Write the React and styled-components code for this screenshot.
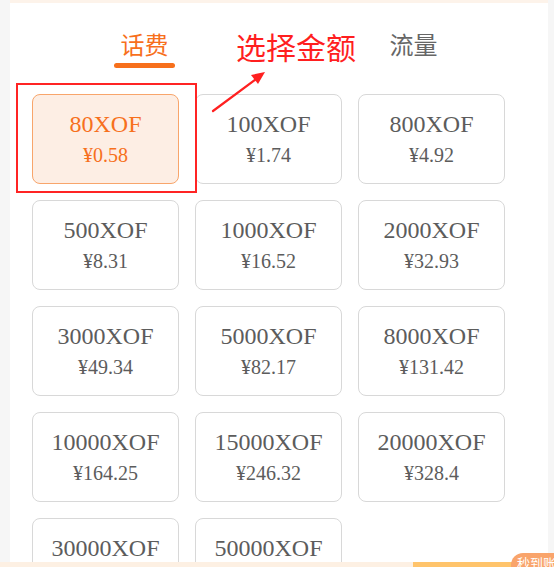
import styled, { createGlobalStyle } from 'styled-components';

const GlobalStyle = createGlobalStyle`
  html, body {
    margin: 0;
    padding: 0;
    height: 567px;
    overflow: hidden;
    background: #f6f6f6;
  }
  body {
    font-family: "Liberation Serif", serif;
  }
`;

const AMOUNTS = [
  { xof: '80XOF', cny: '¥0.58' },
  { xof: '100XOF', cny: '¥1.74' },
  { xof: '800XOF', cny: '¥4.92' },
  { xof: '500XOF', cny: '¥8.31' },
  { xof: '1000XOF', cny: '¥16.52' },
  { xof: '2000XOF', cny: '¥32.93' },
  { xof: '3000XOF', cny: '¥49.34' },
  { xof: '5000XOF', cny: '¥82.17' },
  { xof: '8000XOF', cny: '¥131.42' },
  { xof: '10000XOF', cny: '¥164.25' },
  { xof: '15000XOF', cny: '¥246.32' },
  { xof: '20000XOF', cny: '¥328.4' },
  { xof: '30000XOF', cny: '¥492.75' },
  { xof: '50000XOF', cny: '¥821.25' },
];

const Page = styled.div`
  position: relative;
  padding: 0 6px 0 10px;
  height: 567px;
  box-sizing: border-box;
`;

const Panel = styled.div`
  background: #fff;
  border-top: 3px solid #fdf3ea;
  height: 100%;
`;

const Tabs = styled.div`
  display: flex;
  padding-top: 26px;
`;

const Tab = styled.div`
  flex: 1;
  display: flex;
  flex-direction: column;
  align-items: center;
  font-family: "Noto Sans CJK SC", sans-serif;
  font-size: 24px;
  line-height: 30px;
  color: ${({ $active }) => ($active ? '#f7701c' : '#666')};

  &::after {
    content: '';
    display: block;
    width: 61px;
    height: 5px;
    margin-top: 4px;
    border-radius: 3px;
    background: ${({ $active }) => ($active ? '#f7701c' : 'transparent')};
  }
`;

const Grid = styled.div`
  display: grid;
  grid-template-columns: repeat(3, 147px);
  grid-auto-rows: 90px;
  gap: 16px;
  padding: 26px 0 0 22px;
`;

const Card = styled.div`
  box-sizing: border-box;
  display: flex;
  flex-direction: column;
  align-items: center;
  padding-top: 15px;
  border-radius: 8px;
  border: 1px solid ${({ $selected }) => ($selected ? '#f8a56b' : '#d8d8d8')};
  background: ${({ $selected }) => ($selected ? '#fdeee4' : '#fff')};
  color: ${({ $selected }) => ($selected ? '#f7701c' : '#5c5c5c')};
`;

const Amount = styled.div`
  font-size: 24px;
  line-height: 28px;
`;

const Price = styled.div`
  font-size: 20px;
  line-height: 26px;
  margin-top: 4px;
`;

const Highlight = styled.div`
  position: absolute;
  left: 16px;
  top: 83px;
  width: 181px;
  height: 110px;
  box-sizing: border-box;
  border: 2px solid #ff2424;
  pointer-events: none;
`;

const Note = styled.div`
  position: absolute;
  left: 236px;
  top: 28px;
  font-family: "Noto Sans CJK SC", sans-serif;
  font-size: 30px;
  line-height: 36px;
  color: #ff1f1f;
`;

const Arrow = styled.svg`
  position: absolute;
  left: 205px;
  top: 65px;
`;

const BottomBar = styled.div`
  position: absolute;
  left: 0;
  right: 0;
  bottom: 0;
  height: 5px;
  display: flex;
  background: #fdf0e3;
`;

const BarFill = styled.div`
  margin-left: 413px;
  flex: 1;
  background: #ffc46b;
`;

const Badge = styled.div`
  position: absolute;
  left: 511px;
  top: 553px;
  width: 60px;
  height: 24px;
  padding-left: 6px;
  border-radius: 12px 0 0 0;
  background: #f9a46b;
  color: #fff;
  font-family: "Noto Sans CJK SC", sans-serif;
  font-size: 13px;
  line-height: 20px;
  white-space: nowrap;
`;

export default function App() {
  return (
    <>
      <GlobalStyle />
      <Page>
        <Panel>
          <Tabs>
            <Tab $active>话费</Tab>
            <Tab>流量</Tab>
          </Tabs>
          <Grid>
            {AMOUNTS.map(({ xof, cny }, i) => (
              <Card key={xof} $selected={i === 0}>
                <Amount>{xof}</Amount>
                <Price>{cny}</Price>
              </Card>
            ))}
          </Grid>
        </Panel>
        <Highlight />
        <Note>选择金额</Note>
        <Arrow width="70" height="55" viewBox="0 0 70 55">
          <line x1="8" y1="46" x2="54" y2="12" stroke="#ff2020" strokeWidth="2.2" strokeLinecap="round" />
          <polygon points="60,7 46,10 53,19" fill="#ff2020" />
        </Arrow>
        <BottomBar>
          <BarFill />
        </BottomBar>
        <Badge>秒到账</Badge>
      </Page>
    </>
  );
}
